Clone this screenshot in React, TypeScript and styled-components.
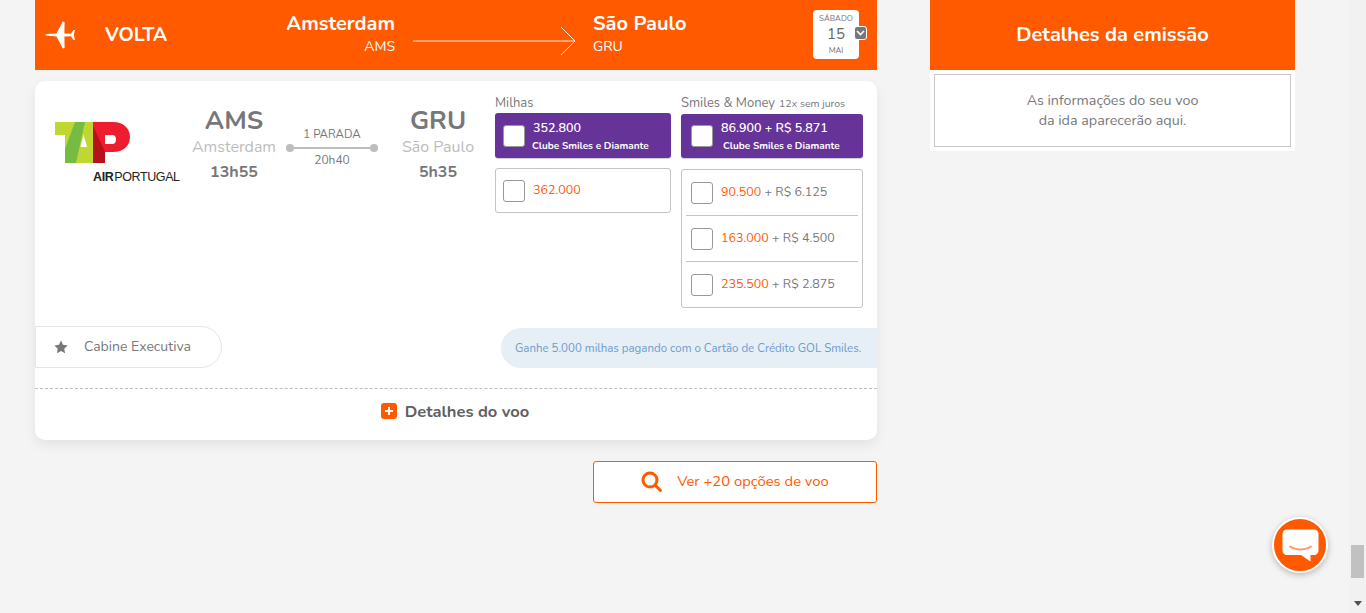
import styled, { createGlobalStyle } from "styled-components"

const orange = "#ff5a00"
const grey = "#77777a"

const GlobalStyle = createGlobalStyle`
    html, body {
        margin: 0;
        height: 613px;
        overflow: hidden;
        background: #f4f4f4;
        font-family: "Nunito", "Noto Sans", "Open Sans", sans-serif;
    }
    * { box-sizing: border-box; }
`
const Page = styled.div`
    display: flex;
    height: 613px;
`
const Content = styled.div`
    flex: 1;
    display: flex;
    align-items: flex-start;
    gap: 53px;
    padding-left: 35px;
`
const Main = styled.div`
    width: 842px;
`
const FlightHeader = styled.div`
    height: 70px;
    background: ${orange};
    display: flex;
    align-items: center;
    color: #fff;
    padding-left: 10px;
`
const PlaneSlot = styled.div`
    width: 60px;
    display: flex;
`
const Direction = styled.div`
    width: 110px;
    font-size: 19.5px;
    font-weight: 700;
    padding-bottom: 2px;
`
const City = styled.div<{ $right?: boolean }>`
    width: 180px;
    padding-bottom: 2px;
    text-align: ${p => p.$right ? "right" : "left"};
`
const CityName = styled.div`
    font-size: 20px;
    font-weight: 700;
    line-height: 27px;
    margin-top: -2px;
`
const CityCode = styled.div`
    font-size: 14px;
    line-height: 20px;
`
const ArrowSlot = styled.div`
    width: 198px;
    display: flex;
    justify-content: center;
    padding: 11px 0 0 1px;
`
const DateWrap = styled.div`
    position: relative;
    margin-left: 40px;
    margin-top: -1px;
`
const DateCard = styled.div`
    width: 46px;
    height: 49px;
    background: #fff;
    border-radius: 4px;
    color: ${grey};
    text-align: center;
    padding-top: 3px;
`
const DateSmall = styled.div`
    font-size: 8px;
    line-height: 11px;
`
const DateDay = styled.div`
    font-size: 15px;
    line-height: 21px;
    color: #666;
`
const DateBadge = styled.div`
    position: absolute;
    left: 41px;
    top: 16px;
    width: 13px;
    height: 14px;
    border-radius: 3px;
    border: 1px solid #fff;
    background: ${grey};
    display: flex;
    align-items: center;
    justify-content: center;
`
const Card = styled.div`
    margin-top: 11px;
    height: 359px;
    background: #fff;
    border-radius: 10px;
    box-shadow: 0 5px 12px rgba(0, 0, 0, 0.07);
    display: flex;
    flex-direction: column;
`
const CardTop = styled.div`
    height: 245px;
    display: flex;
    padding-top: 14px;
`
const LogoSlot = styled.div`
    width: 150px;
    padding: 27px 0 0 20px;
`
const Airport = styled.div<{ $width: number }>`
    width: ${p => p.$width}px;
    text-align: center;
    padding-top: 10px;
`
const Code = styled.div`
    font-size: 26px;
    font-weight: 700;
    line-height: 32px;
    color: ${grey};
`
const AirportCity = styled.div`
    font-size: 16px;
    line-height: 20px;
    color: #bdbdbd;
    white-space: nowrap;
`
const Time = styled.div`
    font-size: 16px;
    font-weight: 700;
    line-height: 24px;
    margin-top: 3px;
    color: ${grey};
`
const Stops = styled.div`
    width: 98px;
    padding-top: 31px;
    text-align: center;
    font-size: 12px;
    line-height: 16px;
    color: ${grey};
`
const StopCount = styled.div`
    font-size: 11.5px;
`
const StopLine = styled.div`
    height: 2px;
    margin: 5px 7px 3px 7px;
    background: #bdbdbd;
    position: relative;
    &::before, &::after {
        content: "";
        position: absolute;
        top: -3px;
        width: 8px;
        height: 8px;
        border-radius: 50%;
        background: #bdbdbd;
    }
    &::before { left: -4px; }
    &::after { right: -4px; }
`
const FareColumn = styled.div<{ $width: number; $left: number }>`
    width: ${p => p.$width}px;
    margin-left: ${p => p.$left}px;
`
const FareLabel = styled.div`
    height: 18px;
    font-size: 13px;
    line-height: 16px;
    color: ${grey};
    white-space: nowrap;
`
const FareNote = styled.span`
    font-size: 10.5px;
    margin-left: 4px;
`
const FareClub = styled.div<{ $top: number; $pad: number }>`
    height: ${p => 45 - p.$top}px;
    margin-top: ${p => p.$top}px;
    background: #663399;
    border-radius: 3px;
    color: #fff;
    padding: 0 ${p => p.$pad}px;
    display: flex;
    align-items: center;
    gap: 8px;
    box-shadow: 0 1px 1px rgba(0, 0, 0, 0.2);
`
const ClubText = styled.div`
    flex: 1;
    font-size: 12.5px;
    font-weight: 600;
    line-height: 17px;
`
const ClubSub = styled.div<{ $left: number }>`
    font-size: 10px;
    font-weight: 700;
    line-height: 13px;
    margin: 4px 0 0 ${p => p.$left}px;
    white-space: nowrap;
`
const Check = styled.div`
    width: 22px;
    height: 22px;
    flex: none;
    background: #fff;
    border: 1px solid #999;
    border-radius: 3px;
`
const FareBox = styled.div<{ $top: number }>`
    margin-top: ${p => p.$top}px;
    background: #fff;
    border: 1px solid #c4c4c4;
    border-radius: 3px;
    padding: 0 4px;
`
const FareRow = styled.div<{ $height: number; $pad: number; $line?: boolean }>`
    height: ${p => p.$height}px;
    display: flex;
    align-items: center;
    gap: 8px;
    padding: 0 ${p => p.$pad}px;
    font-size: 12.5px;
    color: ${grey};
    border-top: ${p => p.$line ? "1px solid #c4c4c4" : "none"};
`
const FareValue = styled.span`
    margin-top: -3px;
`
const Miles = styled.span`
    color: ${orange};
`
const CardMiddle = styled.div`
    display: flex;
    align-items: flex-start;
    justify-content: space-between;
    height: 63px;
    border-bottom: 1px dashed #bdbdbd;
`
const Cabin = styled.div`
    width: 187px;
    height: 42px;
    border: 1px solid #e6e6e6;
    border-radius: 0 21px 21px 0;
    display: flex;
    align-items: center;
    gap: 16px;
    padding-left: 18px;
    padding-bottom: 1px;
    font-size: 14px;
    color: ${grey};
`
const Promo = styled.div`
    width: 376px;
    height: 40px;
    margin-top: 2px;
    background: #e6eef6;
    border-radius: 20px 0 0 20px;
    display: flex;
    align-items: center;
    padding-left: 14px;
    padding-bottom: 1px;
    font-size: 11.5px;
    color: #6b9bcf;
    white-space: nowrap;
`
const DetailsLink = styled.div`
    flex: 1;
    display: flex;
    align-items: center;
    justify-content: center;
    gap: 8px;
    font-size: 16.5px;
    font-weight: 700;
    color: #5f5f63;
    padding-bottom: 7px;
    padding-right: 2px;
`
const PlusBox = styled.div`
    width: 16px;
    height: 16px;
    background: ${orange};
    border-radius: 3px;
    display: flex;
    align-items: center;
    justify-content: center;
`
const MoreRow = styled.div`
    margin-top: 21px;
    display: flex;
    justify-content: flex-end;
`
const MoreButton = styled.button`
    width: 284px;
    height: 42px;
    background: #fff;
    border: 1px solid ${orange};
    border-radius: 3px;
    display: flex;
    align-items: center;
    justify-content: center;
    gap: 15px;
    padding: 0 0 2px 0;
    font-family: inherit;
    font-size: 14.8px;
    color: ${orange};
`
const Side = styled.div`
    width: 365px;
    background: #fff;
    padding-bottom: 4px;
`
const SideHeader = styled.div`
    height: 70px;
    background: ${orange};
    color: #fff;
    display: flex;
    align-items: center;
    justify-content: center;
    padding-bottom: 2px;
    font-size: 20px;
    font-weight: 700;
`
const SideBox = styled.div`
    margin: 4px 4px 0;
    height: 73px;
    border: 1px solid #c8c8c8;
    text-align: center;
    color: ${grey};
    font-size: 14.3px;
    line-height: 20px;
    padding-top: 16px;
`
const Scrollbar = styled.div`
    width: 17px;
    background: #f1f1f1;
    display: flex;
    flex-direction: column;
    justify-content: flex-end;
    align-items: center;
`
const Thumb = styled.div`
    width: 13px;
    height: 33px;
    background: #c1c1c1;
`
const ScrollArrow = styled.div`
    height: 35px;
    padding-top: 23px;
    display: flex;
    justify-content: center;
`
const ChatButton = styled.div`
    position: fixed;
    left: 1272px;
    top: 517px;
    width: 56px;
    height: 56px;
    border-radius: 50%;
    background: ${orange};
    border: 2px solid #fff;
    box-shadow: 0 2px 6px rgba(0, 0, 0, 0.25);
    display: flex;
    align-items: center;
    justify-content: center;
`

const PlaneIcon = () => (
    <svg width="30" height="28" viewBox="0 0 30 28" fill="#fff">
        <path d="M0 14 C1 13.1 4 12.8 11.5 12.6 L17.8 0.6 L19.6 1 L19.4 12.6 L25.8 12.8 L28.6 9 L30 9 L28.8 14 L30 19 L28.6 19 L25.8 15.2 L19.4 15.4 L19.6 27 L17.8 27.4 L11.5 15.4 C4 15.2 1 14.9 0 14 Z" />
    </svg>
)

const LongArrow = () => (
    <svg width="163" height="30" viewBox="0 0 163 30" fill="none" stroke="#fff" strokeWidth="1" opacity="0.85">
        <path d="M0 15 H162 M148 1 L162 15 L148 29" />
    </svg>
)

const TapLogo = () => (
    <svg width="125" height="62" viewBox="0 0 125 62">
        <path d="M0 0 H38 V41 H10 V13 H0 Z" fill="#bfd730" />
        <path d="M20 0 H30 L21 41 H10 V27 Z" fill="#76bc43" />
        <path d="M28.5 12.5 L32 25 H25.5 Z" fill="#fff" />
        <path d="M38 0 H58 C68 0 75 6 75 15 C75 24 68 30 58 30 H50 V41 H38 Z" fill="#ed1c2e" />
        <path d="M38 4 L50 30 V41 H38 Z" fill="#b5121b" />
        <path d="M50 13 H58 C62 13 62 22 58 22 H50 Z" fill="#fff" />
        <text x="38" y="59" fontFamily="'Liberation Sans', sans-serif" fontSize="12.5" letterSpacing="-0.4" fill="#222">
            <tspan fontWeight="700">AIR</tspan><tspan dx="1">PORTUGAL</tspan>
        </text>
    </svg>
)

const StarIcon = () => (
    <svg width="14" height="14" viewBox="0 0 24 24" fill={grey}>
        <path d="M12 1 L15.4 8.3 L23.4 9.3 L17.5 14.8 L19 22.8 L12 18.9 L5 22.8 L6.5 14.8 L0.6 9.3 L8.6 8.3 Z" />
    </svg>
)

const SearchIcon = () => (
    <svg width="21" height="21" viewBox="0 0 21 21" fill="none" stroke={orange} strokeWidth="3" strokeLinecap="round">
        <circle cx="9" cy="9" r="7" />
        <path d="M14.5 14.5 L19.5 19.5" />
    </svg>
)

const ChatIcon = () => (
    <svg width="37" height="33" viewBox="0 0 37 33">
        <path d="M5 0.5 H32 C34.5 0.5 36.5 2.5 36.5 5 V21 C36.5 24 34.5 26 32 26 H28.5 V32.5 L19 26 H5 C2.5 26 0.5 24 0.5 21 V5 C0.5 2.5 2.5 0.5 5 0.5 Z" fill="#fff" />
        <path d="M8 17.5 C14 21.5 23 21.5 29 17.5" fill="none" stroke="#ff9a66" strokeWidth="1.8" strokeLinecap="round" />
    </svg>
)

const App = () => {
    return <Page>
        <GlobalStyle />
        <Content>
            <Main>
                <FlightHeader>
                    <PlaneSlot><PlaneIcon /></PlaneSlot>
                    <Direction>VOLTA</Direction>
                    <City $right>
                        <CityName>Amsterdam</CityName>
                        <CityCode>AMS</CityCode>
                    </City>
                    <ArrowSlot><LongArrow /></ArrowSlot>
                    <City>
                        <CityName>São Paulo</CityName>
                        <CityCode>GRU</CityCode>
                    </City>
                    <DateWrap>
                        <DateCard>
                            <DateSmall>SÁBADO</DateSmall>
                            <DateDay>15</DateDay>
                            <DateSmall>MAI</DateSmall>
                        </DateCard>
                        <DateBadge>
                            <svg width="9" height="6" viewBox="0 0 9 6" fill="none" stroke="#fff" strokeWidth="1.6">
                                <path d="M1 1 L4.5 4.5 L8 1" />
                            </svg>
                        </DateBadge>
                    </DateWrap>
                </FlightHeader>
                <Card>
                    <CardTop>
                        <LogoSlot><TapLogo /></LogoSlot>
                        <Airport $width={98}>
                            <Code>AMS</Code>
                            <AirportCity>Amsterdam</AirportCity>
                            <Time>13h55</Time>
                        </Airport>
                        <Stops>
                            <StopCount>1 PARADA</StopCount>
                            <StopLine />
                            20h40
                        </Stops>
                        <Airport $width={114}>
                            <Code>GRU</Code>
                            <AirportCity>São Paulo</AirportCity>
                            <Time>5h35</Time>
                        </Airport>
                        <FareColumn $width={176} $left={0}>
                            <FareLabel>Milhas</FareLabel>
                            <FareClub $top={0} $pad={8}>
                                <Check />
                                <ClubText>
                                    352.800
                                    <ClubSub $left={-1}>Clube Smiles e Diamante</ClubSub>
                                </ClubText>
                            </FareClub>
                            <FareBox $top={10}>
                                <FareRow $height={43} $pad={3}><Check /><FareValue><Miles>362.000</Miles></FareValue></FareRow>
                            </FareBox>
                        </FareColumn>
                        <FareColumn $width={182} $left={10}>
                            <FareLabel>Smiles &amp; Money<FareNote>12x sem juros</FareNote></FareLabel>
                            <FareClub $top={1} $pad={10}>
                                <Check />
                                <ClubText>
                                    86.900 + R$ 5.871
                                    <ClubSub $left={2}>Clube Smiles e Diamante</ClubSub>
                                </ClubText>
                            </FareClub>
                            <FareBox $top={11}>
                                <FareRow $height={45} $pad={5}><Check /><FareValue><Miles>90.500</Miles> + R$ 6.125</FareValue></FareRow>
                                <FareRow $height={46} $pad={5} $line><Check /><FareValue><Miles>163.000</Miles> + R$ 4.500</FareValue></FareRow>
                                <FareRow $height={46} $pad={5} $line><Check /><FareValue><Miles>235.500</Miles> + R$ 2.875</FareValue></FareRow>
                            </FareBox>
                        </FareColumn>
                    </CardTop>
                    <CardMiddle>
                        <Cabin><StarIcon />Cabine Executiva</Cabin>
                        <Promo>Ganhe 5.000 milhas pagando com o Cartão de Crédito GOL Smiles.</Promo>
                    </CardMiddle>
                    <DetailsLink>
                        <PlusBox>
                            <svg width="8" height="8" viewBox="0 0 8 8" stroke="#fff" strokeWidth="2">
                                <path d="M4 0 V8 M0 4 H8" />
                            </svg>
                        </PlusBox>
                        Detalhes do voo
                    </DetailsLink>
                </Card>
                <MoreRow>
                    <MoreButton><SearchIcon />Ver +20 opções de voo</MoreButton>
                </MoreRow>
            </Main>
            <Side>
                <SideHeader>Detalhes da emissão</SideHeader>
                <SideBox>As informações do seu voo<br />da ida aparecerão aqui.</SideBox>
            </Side>
        </Content>
        <Scrollbar>
            <Thumb />
            <ScrollArrow>
                <svg width="8" height="5" viewBox="0 0 8 5" fill="#505050"><path d="M0 0 H8 L4 5 Z" /></svg>
            </ScrollArrow>
        </Scrollbar>
        <ChatButton><ChatIcon /></ChatButton>
    </Page>
}

export default App
